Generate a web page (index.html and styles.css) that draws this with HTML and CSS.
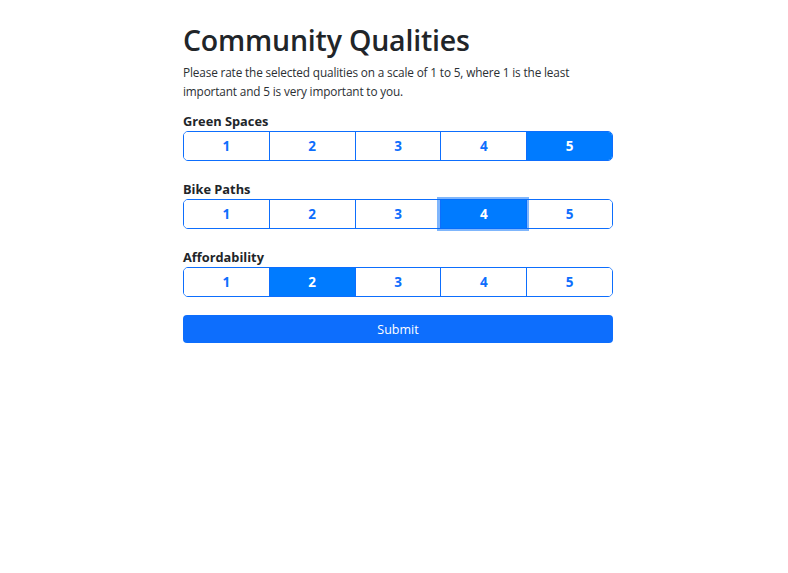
FILE: index.html
```html
<!DOCTYPE html>
<html lang="en">
<head>
<meta charset="UTF-8">
<meta name="viewport" content="width=device-width, initial-scale=1.0">
<title>Community Qualities</title>
<link rel="stylesheet" href="styles.css">
</head>
<body>

<div class="content">
    <h1>Community Qualities</h1>
    <p class="intro">Please rate the selected qualities on a scale of 1 to 5, where 1 is the least important and 5 is very important to you.</p>

    <div class="quality">
        <div class="quality-label">Green Spaces</div>
        <div class="rating-group">
            <button class="rating">1</button>
            <button class="rating">2</button>
            <button class="rating">3</button>
            <button class="rating">4</button>
            <button class="rating active">5</button>
        </div>
    </div>

    <div class="quality">
        <div class="quality-label">Bike Paths</div>
        <div class="rating-group">
            <button class="rating">1</button>
            <button class="rating">2</button>
            <button class="rating">3</button>
            <button class="rating active focused">4</button>
            <button class="rating">5</button>
        </div>
    </div>

    <div class="quality">
        <div class="quality-label">Affordability</div>
        <div class="rating-group">
            <button class="rating">1</button>
            <button class="rating active">2</button>
            <button class="rating">3</button>
            <button class="rating">4</button>
            <button class="rating">5</button>
        </div>
    </div>

    <button class="submit-button">Submit</button>
</div>

</body>
</html>
```

FILE: styles.css
```css
body {
    font-family: "Open Sans", "Noto Sans", Arial, sans-serif;
    margin: 0;
    padding: 0;
    background-color: #ffffff;
    color: #212529;
}

.content {
    width: 430px;
    margin-left: 183px;
    padding-top: 23px;
}

h1 {
    font-size: 28.5px;
    font-weight: 600;
    margin: 0 0 6px 0;
    line-height: 34px;
    letter-spacing: -0.2px;
}

.intro {
    font-size: 11.8px;
    line-height: 18.5px;
    letter-spacing: -0.15px;
    margin: 0 0 11px 0;
    color: #2b2f33;
}

.quality {
    margin-bottom: 18px;
}

.quality-label {
    font-size: 12.8px;
    font-weight: 700;
    line-height: 20px;
}

.rating-group {
    display: flex;
    border: 1px solid #0d6efd;
    border-radius: 5px;
    height: 30px;
    box-sizing: border-box;
}

.rating {
    flex: 1;
    font-family: inherit;
    font-size: 13.5px;
    font-weight: 700;
    color: #0d6efd;
    background-color: #ffffff;
    border: none;
    border-left: 1px solid #0d6efd;
    padding: 0;
    cursor: pointer;
    position: relative;
}

.rating:first-child {
    border-left: none;
    border-radius: 4px 0 0 4px;
}

.rating:last-child {
    border-radius: 0 4px 4px 0;
}

.rating.active {
    background-color: #007bff;
    color: #ffffff;
}

/* Anel de foco do botão selecionado */
.rating.focused {
    box-shadow: 0 0 0 3px rgba(0, 110, 250, 0.5);
    z-index: 1;
}

.submit-button {
    display: block;
    width: 100%;
    height: 28px;
    background-color: #0d6efd;
    color: #ffffff;
    border: none;
    border-radius: 4px;
    font-family: inherit;
    font-size: 12.5px;
    cursor: pointer;
}
```
